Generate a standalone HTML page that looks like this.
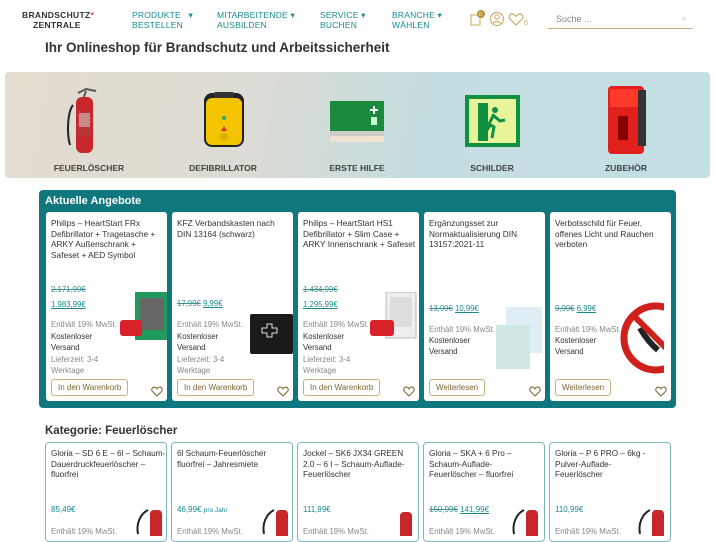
<!DOCTYPE html>
<html><head><meta charset="utf-8"><style>
*{margin:0;padding:0;box-sizing:border-box}
body{width:715px;height:536px;overflow:hidden;background:#fff;font-family:"Liberation Sans",sans-serif;color:#333;position:relative}
.a{position:absolute}
.nav{font-size:8.5px;color:#1a8a8f;line-height:10px;letter-spacing:.2px}
.card{position:absolute;background:#fff;border-radius:3px;width:121px;font-size:7.8px;line-height:10.6px;color:#333}
.card .t{position:absolute;left:5px;top:6px;right:3px;font-size:8.3px;line-height:10.6px;color:#333}
.old{text-decoration:line-through;color:#3a8f93}
.new{text-decoration:underline;color:#1a8a8f}
.g{color:#888}
.btn{position:absolute;left:5px;border:1px solid #c7b080;border-radius:3px;color:#7a6530;font-size:8px;padding:2px 6px;line-height:11px;background:#fff}
.heart{position:absolute;right:4px;width:12px;height:11px}
.lab{position:absolute;top:163px;font-size:8.5px;font-weight:bold;color:#444;text-align:center;width:120px}
.cat{position:absolute;top:442px;width:122px;height:100px;border:1px solid #7fb8bb;border-radius:4px;background:#fff}
.cat .t{position:absolute;left:5px;top:6px;font-size:8.2px;line-height:10.6px;color:#333}
.cat .p{position:absolute;left:5px;top:62px;font-size:8px;color:#1a8a8f}
.cat .e{position:absolute;left:5px;top:84px;font-size:7.8px;color:#888}
</style></head><body>
<div class="a" style="left:22px;top:10px;font-size:8.5px;font-weight:bold;color:#333;line-height:10px;letter-spacing:.3px">BRANDSCHUTZ<span style="color:#e0287a">*</span><br><span style="padding-left:11px">ZENTRALE</span></div>
<div class="a nav" style="left:132px;top:10px">PRODUKTE &nbsp;&nbsp;▾<br>BESTELLEN</div>
<div class="a nav" style="left:217px;top:10px">MITARBEITENDE ▾<br>AUSBILDEN</div>
<div class="a nav" style="left:320px;top:10px">SERVICE ▾<br>BUCHEN</div>
<div class="a nav" style="left:392px;top:10px">BRANCHE ▾<br>WÄHLEN</div>
<svg class="a" style="left:468px;top:9px" width="62" height="18" viewBox="0 0 62 18"><rect x="3" y="6" width="9" height="10" fill="none" stroke="#c7a45a" stroke-width="1"/><circle cx="13" cy="5" r="4" fill="#b8923a"/><text x="11" y="7" font-size="5" fill="#fff" font-family="Liberation Sans">0</text><circle cx="29" cy="10" r="6.5" fill="none" stroke="#c7a45a"/><circle cx="29" cy="8" r="2.2" fill="none" stroke="#c7a45a"/><path d="M25 14.5c1-2.5 7-2.5 8 0" fill="none" stroke="#c7a45a"/><path d="M48 16l-6-6c-2-2 0-6 3-5 1 .3 2 1.2 3 2.3 1-1.1 2-2 3-2.3 3-1 5 3 3 5z" fill="none" stroke="#c7a45a"/><text x="56" y="16" font-size="7" fill="#c7a45a" font-family="Liberation Sans">0</text></svg>
<div class="a" style="left:548px;top:11px;width:145px;height:18px;border-bottom:1px solid #c7b080;font-size:9px;color:#888;padding-left:8px;padding-top:3px">Suche ...<span style="position:absolute;right:6px;top:2px;color:#bbb">⌕</span></div>
<div class="a" style="left:45px;top:40px;font-size:13.5px;font-weight:bold;color:#333">Ihr Onlineshop für Brandschutz und Arbeitssicherheit</div>
<div class="a" style="left:5px;top:72px;width:705px;height:106px;border-radius:4px;background:linear-gradient(100deg,#e4dccf 0%,#dcdcd4 35%,#c3dde0 60%,#c5e0e4 100%)"></div>
<svg class="a" style="left:60px;top:85px" width="50" height="70"><path d="M13 20c-6 8-6 30-3 40" fill="none" stroke="#222" stroke-width="2"/><path d="M18 8l8-4 10 2M26 6l-2 6" stroke="#555" stroke-width="2" fill="none"/><rect x="16" y="12" width="17" height="56" rx="6" fill="#c8262a"/><rect x="18" y="26" width="13" height="26" fill="#b33"/><rect x="19" y="28" width="11" height="14" fill="#ddd" opacity=".5"/></svg>
<svg class="a" style="left:202px;top:90px" width="44" height="60"><rect x="2" y="3" width="40" height="54" rx="8" fill="#222"/><rect x="4" y="8" width="36" height="47" rx="6" fill="#f5c400"/><rect x="12" y="2" width="20" height="6" rx="2" fill="#333"/><circle cx="22" cy="28" r="2" fill="#2a7"/><path d="M22 36l3 5h-6z" fill="#d33"/><circle cx="22" cy="47" r="4" fill="#e0b000"/></svg>
<svg class="a" style="left:330px;top:101px" width="54" height="42"><rect x="0" y="0" width="54" height="30" fill="#1b8a3c"/><rect x="0" y="30" width="54" height="5" fill="#ccc"/><rect x="0" y="35" width="54" height="6" fill="#f0e2d0"/><path d="M44 5v8M40 9h8" stroke="#fff" stroke-width="2"/><rect x="41" y="16" width="6" height="8" fill="#cfc"/></svg>
<svg class="a" style="left:465px;top:95px" width="55" height="52"><rect width="55" height="52" fill="#109040"/><rect x="4" y="4" width="47" height="44" fill="#e8f49a"/><path d="M13 8h10v38H13" fill="#109040"/><circle cx="30" cy="15" r="3" fill="#109040"/><path d="M29 19l-5 10 5 3-2 11M29 21l6 5 5-1M26 29l-4 6" stroke="#109040" stroke-width="3" fill="none"/></svg>
<svg class="a" style="left:604px;top:84px" width="44" height="72"><rect x="4" y="2" width="36" height="68" rx="4" fill="#e0201d"/><rect x="6" y="5" width="30" height="18" fill="#ff3a2a"/><rect x="34" y="6" width="8" height="56" fill="#333"/><rect x="14" y="32" width="10" height="24" rx="2" fill="#800"/></svg>
<div class="lab" style="left:29px">FEUERLÖSCHER</div>
<div class="lab" style="left:163px">DEFIBRILLATOR</div>
<div class="lab" style="left:297px">ERSTE HILFE</div>
<div class="lab" style="left:432px">SCHILDER</div>
<div class="lab" style="left:566px">ZUBEHÖR</div>
<div class="a" style="left:39px;top:190px;width:637px;height:218px;background:#0f777d;border-radius:4px"></div>
<div class="a" style="left:45px;top:195px;font-size:11px;font-weight:bold;color:#fff">Aktuelle Angebote</div>

<div class="card" style="left:46px;top:212px;height:189px">
<div class="t">Philips – HeartStart FRx Defibrillator + Tragetasche + ARKY Außenschrank + Safeset + AED Symbol</div>
<div class="a" style="left:5px;top:73px"><span class="old">2.171,99€</span><br><span class="new" style="line-height:18px">1.983,99€</span></div>
<div class="a" style="left:5px;top:107px;line-height:11.5px"><span class="g">Enthält 19% MwSt.</span><br>Kostenloser<br>Versand<br><span class="g">Lieferzeit: 3-4<br>Werktage</span></div>
<svg class="a" style="left:74px;top:80px" width="47" height="50"><rect x="15" y="0" width="32" height="48" fill="#1f9a5c"/><rect x="20" y="6" width="24" height="32" fill="#666"/><rect x="0" y="28" width="22" height="16" rx="3" fill="#d8222a"/></svg>
<div class="btn" style="top:167px">In den Warenkorb</div>
<svg class="heart" style="top:174px" viewBox="0 0 12 11"><path d="M6 10L1.5 5.5C0 4 1 1 3.3 1 4.6 1 5.5 2 6 2.8 6.5 2 7.4 1 8.7 1 11 1 12 4 10.5 5.5z" fill="none" stroke="#7a6530"/></svg>
</div>

<div class="card" style="left:172px;top:212px;height:189px">
<div class="t">KFZ Verbandskasten nach DIN 13164 (schwarz)</div>
<div class="a" style="left:5px;top:87px"><span class="old">17,99€</span> <span class="new">9,99€</span></div>
<div class="a" style="left:5px;top:107px;line-height:11.5px"><span class="g">Enthält 19% MwSt.</span><br>Kostenloser<br>Versand<br><span class="g">Lieferzeit: 3-4<br>Werktage</span></div>
<svg class="a" style="left:78px;top:102px" width="43" height="40"><rect width="43" height="40" rx="2" fill="#1a1a1a"/><path d="M12 14h5v-4h5v4h5v5h-5v4h-5v-4h-5z" fill="none" stroke="#ddd"/></svg>
<div class="btn" style="top:167px">In den Warenkorb</div>
<svg class="heart" style="top:174px" viewBox="0 0 12 11"><path d="M6 10L1.5 5.5C0 4 1 1 3.3 1 4.6 1 5.5 2 6 2.8 6.5 2 7.4 1 8.7 1 11 1 12 4 10.5 5.5z" fill="none" stroke="#7a6530"/></svg>
</div>

<div class="card" style="left:298px;top:212px;height:189px">
<div class="t">Philips – HeartStart HS1 Defibrillator + Slim Case + ARKY Innenschrank + Safeset</div>
<div class="a" style="left:5px;top:73px"><span class="old">1.434,99€</span><br><span class="new" style="line-height:18px">1.295,99€</span></div>
<div class="a" style="left:5px;top:107px;line-height:11.5px"><span class="g">Enthält 19% MwSt.</span><br>Kostenloser<br>Versand<br><span class="g">Lieferzeit: 3-4<br>Werktage</span></div>
<svg class="a" style="left:72px;top:80px" width="49" height="50"><rect x="16" y="0" width="30" height="46" fill="#eee" stroke="#bbb"/><rect x="20" y="5" width="22" height="30" fill="#ddd"/><rect x="0" y="28" width="24" height="16" rx="3" fill="#d8222a"/></svg>
<div class="btn" style="top:167px">In den Warenkorb</div>
<svg class="heart" style="top:174px" viewBox="0 0 12 11"><path d="M6 10L1.5 5.5C0 4 1 1 3.3 1 4.6 1 5.5 2 6 2.8 6.5 2 7.4 1 8.7 1 11 1 12 4 10.5 5.5z" fill="none" stroke="#7a6530"/></svg>
</div>

<div class="card" style="left:424px;top:212px;height:189px">
<div class="t">Ergänzungsset zur Normaktualisierung DIN 13157:2021-11</div>
<div class="a" style="left:5px;top:92px"><span class="old">13,99€</span> <span class="new">10,99€</span></div>
<div class="a" style="left:5px;top:112px;line-height:11px"><span class="g">Enthält 19% MwSt.</span><br>Kostenloser<br>Versand</div>
<svg class="a" style="left:72px;top:95px" width="46" height="62"><rect x="10" y="0" width="36" height="46" fill="#dfeef5"/><rect x="0" y="18" width="34" height="44" fill="#cfe8e4"/></svg>
<div class="btn" style="top:167px">Weiterlesen</div>
<svg class="heart" style="top:174px" viewBox="0 0 12 11"><path d="M6 10L1.5 5.5C0 4 1 1 3.3 1 4.6 1 5.5 2 6 2.8 6.5 2 7.4 1 8.7 1 11 1 12 4 10.5 5.5z" fill="none" stroke="#7a6530"/></svg>
</div>

<div class="card" style="left:550px;top:212px;height:189px">
<div class="t">Verbotsschild für Feuer,<br>offenes Licht und Rauchen verboten</div>
<div class="a" style="left:5px;top:92px"><span class="old">9,99€</span> <span class="new">6,99€</span></div>
<div class="a" style="left:5px;top:112px;line-height:11px"><span class="g">Enthält 19% MwSt.</span><br>Kostenloser<br>Versand</div>
<svg class="a" style="left:70px;top:88px" width="44" height="76"><circle cx="36" cy="38" r="32" fill="#fff" stroke="#d0201c" stroke-width="7"/><path d="M20 28q8 14 18 22" stroke="#222" stroke-width="6"/><path d="M12 14l48 48" stroke="#d0201c" stroke-width="6"/></svg>
<div class="btn" style="top:167px">Weiterlesen</div>
<svg class="heart" style="top:174px" viewBox="0 0 12 11"><path d="M6 10L1.5 5.5C0 4 1 1 3.3 1 4.6 1 5.5 2 6 2.8 6.5 2 7.4 1 8.7 1 11 1 12 4 10.5 5.5z" fill="none" stroke="#7a6530"/></svg>
</div>

<div class="a" style="left:45px;top:425px;font-size:11.5px;font-weight:bold;color:#333">Kategorie: Feuerlöscher</div>
<div class="cat" style="left:45px"><div class="t">Gloria – SD 6 E – 6l – Schaum-<br>Dauerdruckfeuerlöscher –<br>fluorfrei</div><div class="p">85,49€</div><div class="e">Enthält 19% MwSt.</div></div>
<div class="cat" style="left:171px"><div class="t">6l Schaum-Feuerlöscher<br>fluorfrei – Jahresmiete</div><div class="p">46,99€ <span style="font-size:6.5px">pro Jahr</span></div><div class="e">Enthält 19% MwSt.</div></div>
<div class="cat" style="left:297px"><div class="t">Jockel – SK6 JX34 GREEN<br>2.0 – 6 l – Schaum-Auflade-<br>Feuerlöscher</div><div class="p">111,99€</div><div class="e">Enthält 19% MwSt.</div></div>
<div class="cat" style="left:423px"><div class="t">Gloria – SKA + 6 Pro –<br>Schaum-Auflade-<br>Feuerlöscher – fluorfrei</div><div class="p"><span class="old">150,99€</span> <span class="new">141,99€</span></div><div class="e">Enthält 19% MwSt.</div></div>
<div class="cat" style="left:549px"><div class="t">Gloria – P 6 PRO – 6kg -<br>Pulver-Auflade-<br>Feuerlöscher</div><div class="p">110,99€</div><div class="e">Enthält 19% MwSt.</div></div>
<svg class="a" style="left:130px;top:504px" width="36" height="32"><path d="M8 30c-2-10 2-20 10-24" fill="none" stroke="#222" stroke-width="2"/><rect x="20" y="6" width="12" height="30" rx="4" fill="#c8262a"/></svg>
<svg class="a" style="left:256px;top:504px" width="36" height="32"><path d="M8 30c-2-10 2-20 10-24" fill="none" stroke="#222" stroke-width="2"/><rect x="20" y="6" width="12" height="30" rx="4" fill="#c8262a"/></svg>
<svg class="a" style="left:382px;top:508px" width="36" height="28"><rect x="18" y="4" width="12" height="30" rx="4" fill="#c8262a"/></svg>
<svg class="a" style="left:506px;top:504px" width="36" height="32"><path d="M8 30c-2-10 2-20 10-24" fill="none" stroke="#222" stroke-width="2"/><rect x="20" y="6" width="12" height="30" rx="4" fill="#c8262a"/></svg>
<svg class="a" style="left:632px;top:504px" width="36" height="32"><path d="M8 30c-2-10 2-20 10-24" fill="none" stroke="#222" stroke-width="2"/><rect x="20" y="6" width="12" height="30" rx="4" fill="#c8262a"/></svg>
</body></html>
